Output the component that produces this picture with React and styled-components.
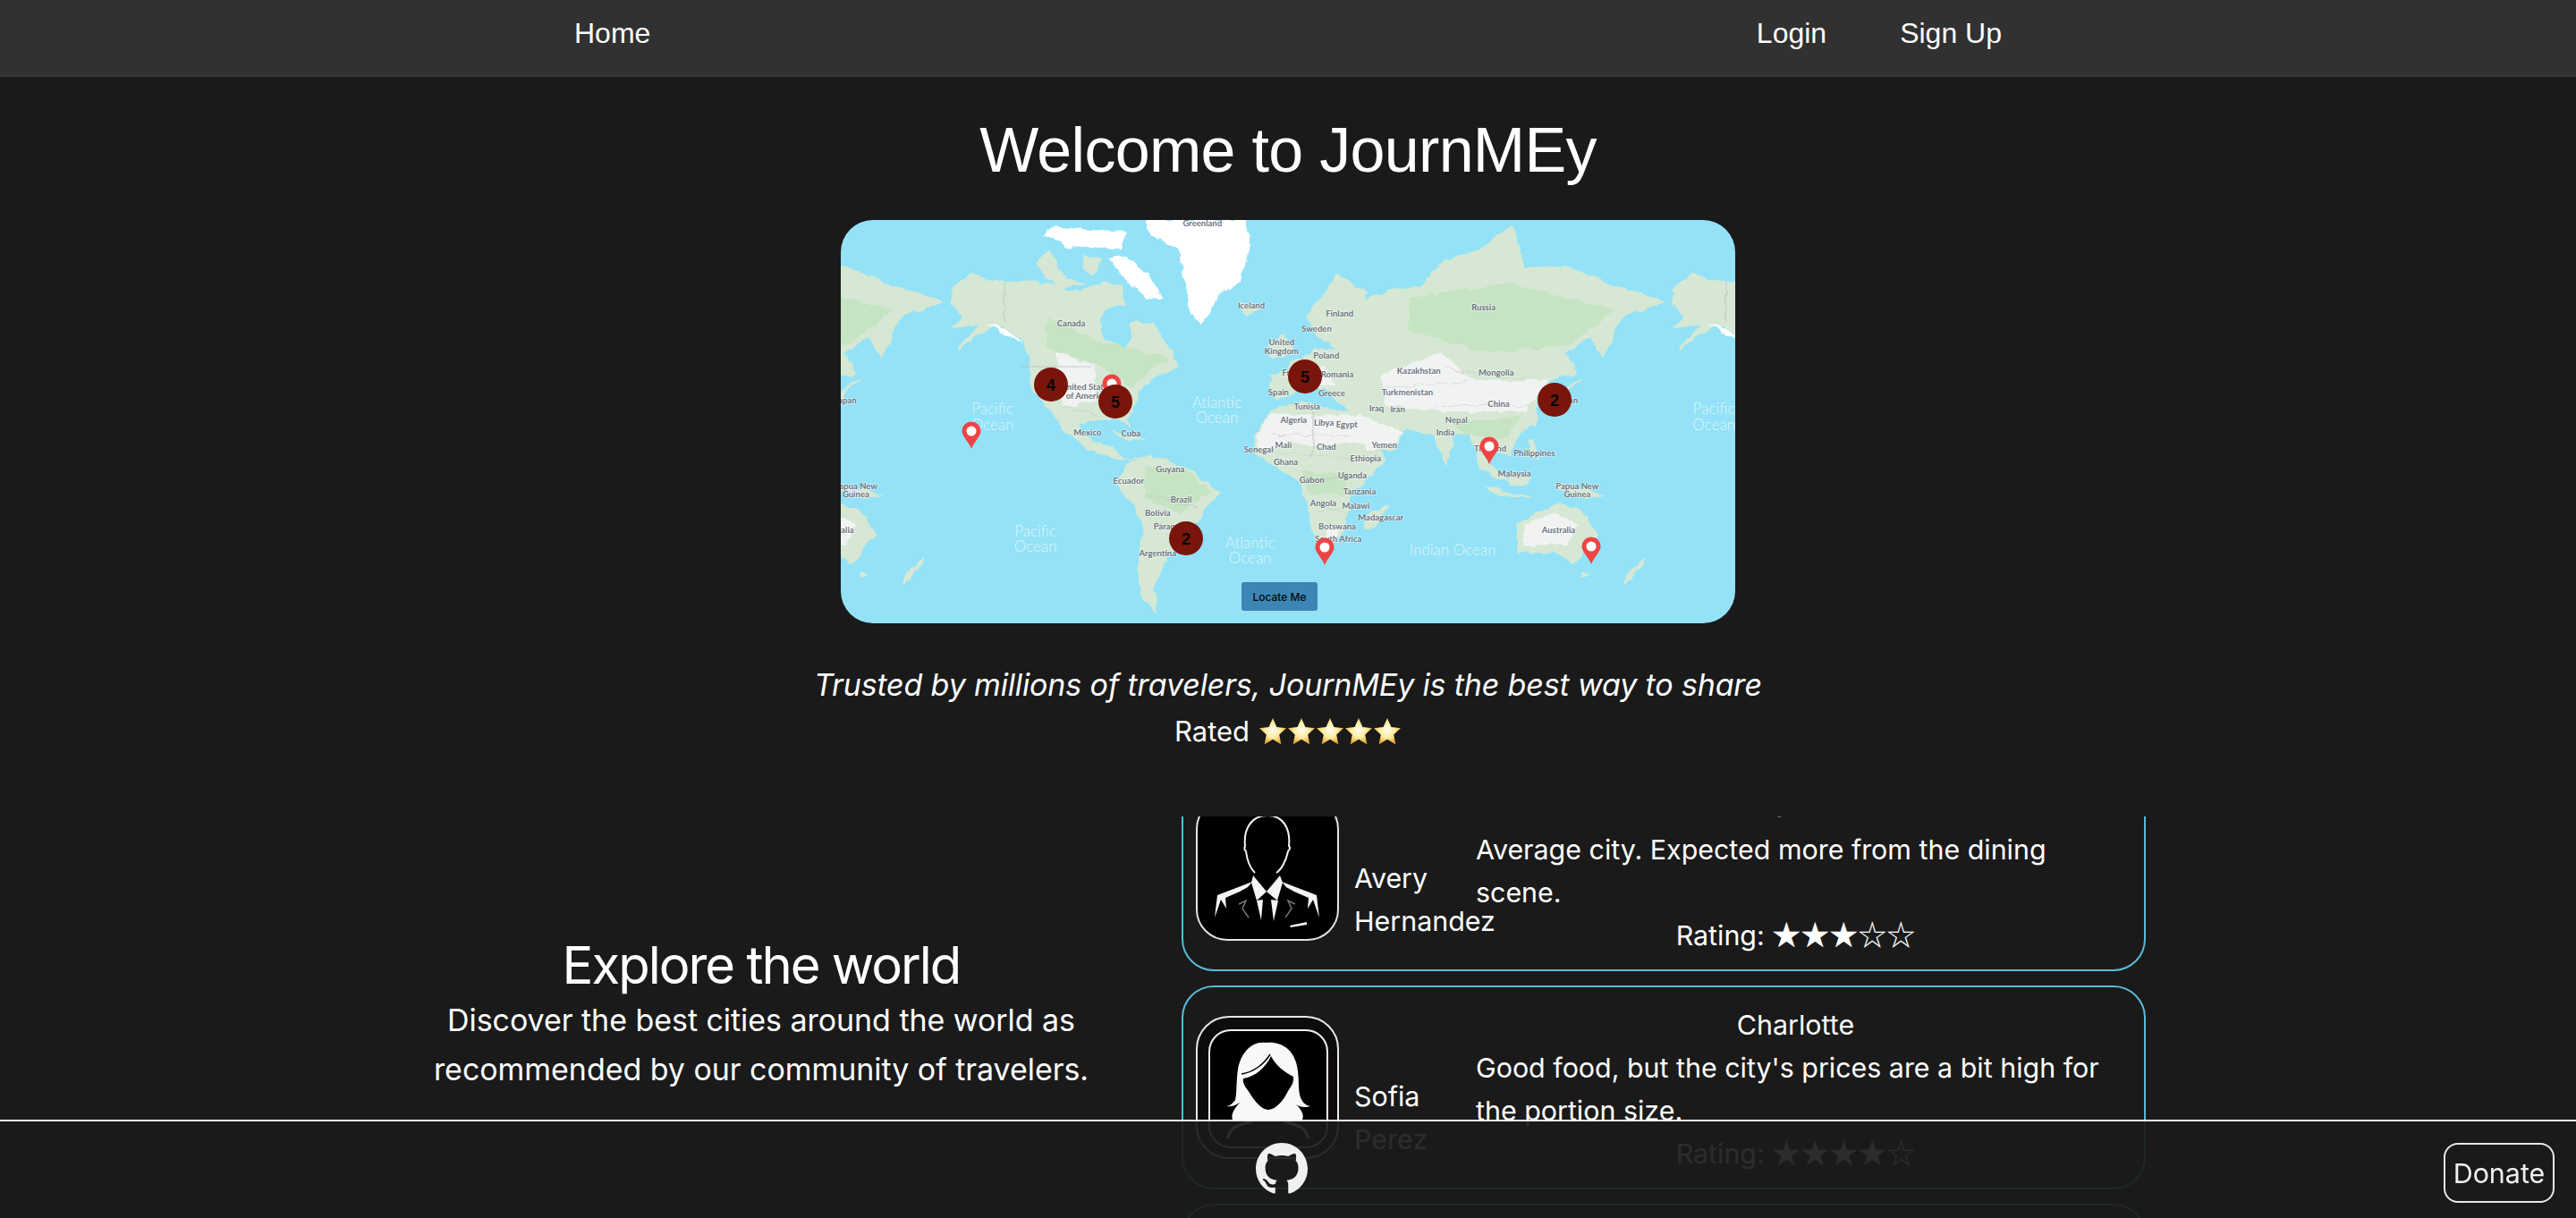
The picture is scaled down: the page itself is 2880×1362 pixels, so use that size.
import styled, { createGlobalStyle } from 'styled-components';

const GlobalStyle = createGlobalStyle`
  html, body {
    margin: 0;
    height: 100%;
    overflow: hidden;
    background: #1a1a1a;
    color: #fff;
    font-family: Inter, "Liberation Sans", sans-serif;
  }
  #root { height: 100%; }
`;

// land is traced in a 1479x1352 grid, scaled down to the 1000x451 map
const LAND = [
  '246,303 276,263 330,288 374,283 416,303 453,318 493,288 522,298 527,358 493,378 485,428 493,478 532,518 540,478 540,418 572,428 606,518 616,568 582,598 552,648 540,718 527,748 535,775 520,745 470,745 450,770 465,810 510,840 525,880 545,880 510,880 470,845 430,780 400,710 374,640 374,528 360,488 325,428 296,448 254,508 291,428 249,438 261,398 244,358',
  '540,890 570,870 630,910 682,990 650,1080 620,1150 590,1230 575,1320 580,1390 555,1330 555,1200 560,1090 530,1000 515,960',
  '770,640 770,600 800,590 800,560 830,540 845,510 880,510 850,470 840,440 830,400 880,265 930,320 920,350 960,320 1020,300 1060,210 1110,190 1170,100 1190,240 1260,230 1320,290 1420,350 1400,370 1350,400 1320,540 1300,470 1255,520 1275,590 1230,620 1210,690 1205,760 1170,820 1165,870 1130,830 1125,890 1165,960 1120,920 1100,790 1070,800 1060,890 1040,800 1000,770 990,780 970,850 925,850 905,740 880,680 860,640 820,640 800,670 780,680',
  '745,800 770,720 820,690 905,730 960,880 900,1000 890,1110 860,1195 840,1130 835,1050 820,950 775,905 745,860',
  '1178,1100 1215,1060 1240,1030 1275,1040 1310,1130 1270,1230 1240,1190 1180,1195',
  '384,218 404,183 429,278 461,293 419,303 395,260',
  '463,198 488,208 478,258 461,238',
  '790,460 812,520 775,540 770,500',
  '718,360 760,370 730,392',
  '1280,610 1265,640 1250,690 1240,680',
  '962,1035 948,1100 925,1112 930,1070',
  '1170,930 1200,940 1190,970 1165,965',
  '1240,960 1320,1000 1290,1012 1250,990',
  '1200,820 1215,880 1200,870',
  '1388,1220 1370,1270 1355,1300 1365,1260',
  '510,790 560,815 530,810',
  '1130,975 1200,1005 1140,995',
  '1285,1260 1296,1268 1285,1275',
];

const ICE = [
  '562,78 729,78 737,158 720,288 690,318 655,428 636,388 631,298 616,178 572,128',
  '503,208 532,198 572,268 591,343 562,338 532,278',
  '394,128 414,98 532,118 522,178 434,168',
  '300,425 330,440 358,495 340,480',
];

const PALE = [
  '745,800 770,730 920,730 950,830 800,830 750,850',
  '920,740 990,790 970,840 930,850',
  '950,600 1050,520 1100,610 1230,620 1190,720 1050,720 960,700',
  '415,520 480,570 480,690 425,700',
  '1190,1100 1240,1060 1280,1100 1260,1170 1190,1170',
  '790,590 860,570 880,640 820,620',
  '860,1100 885,1110 865,1180',
];

const LUSH = [
  '1000,340 1160,290 1340,380 1260,500 1120,520 1000,450',
  '400,400 480,480 600,540 540,640 480,560 400,510',
  '560,900 630,920 670,990 620,1060 560,1010',
  '820,920 900,930 890,1000 835,1000',
  '1070,760 1180,740 1160,810 1090,800',
];

const BORDERS = [
  '770,800 900,800', '840,720 840,870', '780,860 950,880', '835,950 900,940', '850,1050 900,1060',
  '960,640 1100,620', '1040,700 1200,700', '1060,580 1200,610', '560,1000 650,1040', '580,1090 620,1130',
  '425,700 490,735', '330,288 330,420',
];

const LABELS = [
  ['Greenland', 657, 90], ['Iceland', 738, 366], ['Canada', 440, 425], ['Russia', 1122, 371],
  ['Finland', 884, 393], ['Sweden', 846, 444], ['United', 788, 490], ['Kingdom', 788, 520],
  ['Poland', 862, 534], ['Romania', 880, 598], ['Kazakhstan', 1015, 586], ['Mongolia', 1143, 590],
  ['France', 810, 592], ['Spain', 783, 658], ['Greece', 871, 661], ['Turkmenistan', 996, 658],
  ['China', 1147, 695], ['Tunisia', 830, 705], ['Iraq', 945, 711], ['Iran', 980, 714],
  ['Algeria', 808, 750], ['Libya', 858, 760], ['Egypt', 896, 764], ['Nepal', 1077, 750],
  ['India', 1059, 792], ['Mexico', 467, 791], ['Cuba', 539, 796], ['Philippines', 1206, 860],
  ['Mali', 791, 834], ['Chad', 862, 840], ['Yemen', 958, 835], ['Senegal', 750, 849],
  ['Ethiopia', 927, 878], ['Ghana', 795, 892], ['Guyana', 604, 915], ['Malaysia', 1173, 930],
  ['Uganda', 905, 937], ['Ecuador', 535, 955], ['Gabon', 838, 952], ['Tanzania', 917, 991],
  ['Brazil', 622, 1016], ['Angola', 857, 1028], ['Malawi', 911, 1037], ['Bolivia', 583, 1063],
  ['Madagascar', 952, 1077], ['Botswana', 880, 1107], ['Australia', 1246, 1119],
  ['South Africa', 882, 1150], ['Argentina', 583, 1198], ['Paraguay', 605, 1108],
  ['Papua New', 1277, 971], ['Guinea', 1277, 1000], ['United States', 465, 640],
  ['of America', 465, 668], ['Japan', 1260, 683], ['Thailand', 1133, 845],
];

const OCEANS = [
  ['Pacific', 310, 715], ['Ocean', 310, 767], ['Atlantic', 681, 693], ['Ocean', 681, 745],
  ['Pacific', 381, 1125], ['Ocean', 381, 1177], ['Atlantic', 736, 1164], ['Ocean', 736, 1216],
  ['Indian Ocean', 1071, 1188],
];

const toX = (x) => (x - 59) * 0.676;
const toY = (y) => (y - 78) / 3 + 3;

const inView = (x, shift) => x + shift > -30 && x + shift < 1030;

const CLUSTERS = [
  [235, 184, 4], [307, 203, 5], [519, 175, 5], [798, 201, 2], [386, 356, 2],
];

const PINS = [
  [146, 256], [725, 273], [541, 386], [839, 385],
];

const World = ({ x }) => (
  <g transform={`translate(${x} 0)`}>
    <g filter="url(#coast)">
      <g transform="scale(0.676 0.3333) translate(-59 -78)">
        {LAND.map((p) => <polygon key={p} points={p} fill="#d6e8d4" stroke="#d6e8d4" strokeWidth="4" strokeLinejoin="round" />)}
        {LUSH.map((p) => <polygon key={p} points={p} fill="#c6e3c3" />)}
        {PALE.map((p) => <polygon key={p} points={p} fill="#f1f3f3" />)}
        {ICE.map((p) => <polygon key={p} points={p} fill="#ffffff" />)}
        {BORDERS.map((p) => <polyline key={p} points={p} fill="none" stroke="#c3c8c4" strokeWidth="1.6" />)}
      </g>
    </g>
    {LABELS.filter(([, lx]) => inView(toX(lx), x)).map(([t, lx, ly]) => (
      <text key={t} x={toX(lx)} y={toY(ly)} textAnchor="middle" fontFamily="Lato, sans-serif" fontSize="9.5" fontWeight="700" fill="#6d7480" stroke="#ffffff" strokeOpacity="0.55" strokeWidth="1.6" paintOrder="stroke">{t}</text>
    ))}
    {OCEANS.filter(([, lx]) => inView(toX(lx), x)).map(([t, lx, ly]) => (
      <text key={`${t}${lx}${ly}`} x={toX(lx)} y={toY(ly) + 2} textAnchor="middle" fontFamily="Lato, sans-serif" fontSize="17" fontWeight="300" fill="#dff5fb">{t}</text>
    ))}
  </g>
);

const Pin = ({ x, tip }) => (
  <g transform={`translate(${x} ${tip})`}>
    <path d="M0 0 C-3 -8 -10.5 -14 -10.5 -20 A10.5 10.5 0 1 1 10.5 -20 C10.5 -14 3 -8 0 0 Z" fill="#ef4444" />
    <circle cy="-20" r="5.5" fill="#fff" />
  </g>
);

const WorldMap = () => (
  <MapSvg viewBox="0 0 1000 451">
    <defs>
      <filter id="coast" x="-5%" y="-5%" width="110%" height="110%">
        <feTurbulence type="fractalNoise" baseFrequency="0.07" numOctaves="3" seed="4" />
        <feDisplacementMap in="SourceGraphic" scale="9" xChannelSelector="R" yChannelSelector="G" />
        <feGaussianBlur stdDeviation="0.5" />
      </filter>
    </defs>
    <rect width="1000" height="451" fill="#93e2f7" />
    <World x={-806.5} />
    <World x={0} />
    <World x={806.5} />
    <polyline points="199,164 280,164" fill="none" stroke="#b9bdb8" strokeWidth="0.8" />
    <Pin x={303} tip={203} />
    {PINS.map(([x, tip]) => <Pin key={x} x={x} tip={tip} />)}
    {CLUSTERS.map(([x, y, n]) => (
      <g key={x}>
        <circle cx={x} cy={y} r="19" fill="#7a150b" />
        <text x={x} y={y + 6.5} textAnchor="middle" fontFamily="Liberation Sans, sans-serif" fontWeight="700" fontSize="18" fill="#0a0505">{n}</text>
      </g>
    ))}
  </MapSvg>
);

const EmojiStar = () => (
  <StarSvg viewBox="0 0 32 32">
    <defs>
      <radialGradient id="gold" cx="50%" cy="45%" r="58%">
        <stop offset="0%" stopColor="#fffdf0" />
        <stop offset="50%" stopColor="#fdeb9f" />
        <stop offset="100%" stopColor="#e39a20" />
      </radialGradient>
    </defs>
    <path d="M16 1 L20.4 11 L31 12.2 L23.2 19.4 L25.4 30.4 L16 24.8 L6.6 30.4 L8.8 19.4 L1 12.2 L11.6 11 Z" fill="url(#gold)" />
  </StarSvg>
);

const ManAvatar = () => (
  <AvatarSvg viewBox="0 0 160 160">
    <rect x="1" y="1" width="158" height="158" rx="34" fill="#000" stroke="#e4e4e4" strokeWidth="2" />
    <path d="M66 84 C60 78 57 68 56 60 C54 58 54 56 55 54 C53 35 62 20 80 20 C98 20 106 35 104 54 C106 56 105 58 103 60 C101 70 96 80 90 84" fill="none" stroke="#f2f2f2" strokeWidth="2" />
    <g fill="#f6f5f3">
      <polygon points="64,87 79,105 68,115 62,95" />
      <polygon points="94,87 79,105 91,115 97,95" />
      <polygon points="68,115 75,114 73,137" />
      <polygon points="84,114 92,115 87,138" />
      <polygon points="63,94 24,109 21,134 28,114 34,124 33,112 49,105 58,100" />
      <polygon points="96,94 135,109 138,134 131,114 125,124 126,112 110,105 101,100" />
      <polygon points="105,143 124,139 124,142 106,145" />
    </g>
    <polyline points="48,119 56,115 52,124 59,134" fill="none" stroke="#777" strokeWidth="1.5" />
    <polyline points="111,119 103,115 107,124 100,134" fill="none" stroke="#777" strokeWidth="1.5" />
  </AvatarSvg>
);

const WomanAvatar = () => (
  <AvatarSvg viewBox="0 0 160 160">
    <rect x="1" y="1" width="158" height="158" rx="36" fill="#0e0b0c" stroke="#e8e8e8" strokeWidth="2" />
    <rect x="15" y="16" width="132" height="131" rx="24" fill="#000" stroke="#f0f0f0" strokeWidth="2" />
    <path d="M78 30 C62 28 50 42 47 60 C45 72 46 86 44 94 C41 98 38 101 34 101 C42 102 46 99 50 96 C42 104 38 112 42 118 L118 118 C122 112 119 106 112 99 C116 102 122 103 128 101 C122 100 118 96 116 88 C114 76 116 66 112 52 C108 38 96 28 78 30 Z" fill="#f8f8f8" />
    <path d="M84 45 C78 58 66 68 53 70 C52 76 56 80 60 86 C66 96 74 105 81 105 C88 105 97 96 102 86 C105 80 110 76 109 68 C98 62 90 56 84 45 Z" fill="#000" />
    <path d="M52 68 C66 66 78 56 84 46" fill="none" stroke="#000" strokeWidth="1.5" transform="translate(-1 -3)" />
    <path d="M36 137 C36 124 52 120 64 118 M125 137 C125 124 108 120 98 118" fill="none" stroke="#fff" strokeWidth="3" />
  </AvatarSvg>
);

const REVIEWS = [
  { name: 'Avery Hernandez', city: 'Charlotte', text: 'Average city. Expected more from the dining scene.', score: 3, Avatar: ManAvatar },
  { name: 'Sofia Perez', city: 'Charlotte', text: "Good food, but the city's prices are a bit high for the portion size.", score: 4, Avatar: WomanAvatar },
  { name: 'Liam Carter', city: 'Charlotte', text: 'Friendly people and plenty to see.', score: 4, Avatar: ManAvatar },
];

const App = () => (
  <Page>
    <GlobalStyle />
    <NavBar>
      <NavInner>
        <NavLink>Home</NavLink>
        <NavGroup>
          <NavLink>Login</NavLink>
          <NavLink>Sign Up</NavLink>
        </NavGroup>
      </NavInner>
    </NavBar>

    <Title>Welcome to JournMEy</Title>
    <MapBox>
      <WorldMap />
      <LocateButton>Locate Me</LocateButton>
    </MapBox>
    <Tagline>Trusted by millions of travelers, JournMEy is the best way to share</Tagline>
    <RatedRow>
      Rated
      <Stars>{[1, 2, 3, 4, 5].map((i) => <EmojiStar key={i} />)}</Stars>
    </RatedRow>

    <Lower>
      <Intro>
        <IntroTitle>Explore the world</IntroTitle>
        <IntroText>Discover the best cities around the world as recommended by our community of travelers.</IntroText>
      </Intro>
      <ReviewPanel>
        <ReviewList>
          {REVIEWS.map(({ name, city, text, score, Avatar }) => (
            <ReviewCard key={name}>
              <Author>
                <Avatar />
                <AuthorName>{name}</AuthorName>
              </Author>
              <ReviewBody>
                <City>{city}</City>
                <ReviewText>{text}</ReviewText>
                <Rating>
                  Rating: <RatingStars>{'★'.repeat(score)}{'☆'.repeat(5 - score)}</RatingStars>
                </Rating>
              </ReviewBody>
            </ReviewCard>
          ))}
        </ReviewList>
      </ReviewPanel>
    </Lower>

    <Footer>
      <GithubMark viewBox="0 0 16 16">
        <path fill="#f0f0f0" d="M8 0C3.58 0 0 3.58 0 8c0 3.54 2.29 6.53 5.47 7.59.4.07.55-.17.55-.38 0-.19-.01-.82-.01-1.49-2.01.37-2.53-.49-2.69-.94-.09-.23-.48-.94-.82-1.13-.28-.15-.68-.52-.01-.53.63-.01 1.08.58 1.23.82.72 1.21 1.87.87 2.33.66.07-.52.28-.87.51-1.07-1.78-.2-3.64-.89-3.64-3.95 0-.87.31-1.59.82-2.15-.08-.2-.36-1.02.08-2.12 0 0 .67-.21 2.2.82.64-.18 1.32-.27 2-.27.68 0 1.36.09 2 .27 1.53-1.04 2.2-.82 2.2-.82.44 1.1.16 1.92.08 2.12.51.56.82 1.27.82 2.15 0 3.07-1.87 3.75-3.65 3.95.29.25.54.73.54 1.48 0 1.07-.01 1.93-.01 2.2 0 .21.15.46.55.38A8.013 8.013 0 0016 8c0-4.42-3.58-8-8-8z" />
      </GithubMark>
      <DonateButton>Donate</DonateButton>
    </Footer>
  </Page>
);

const Page = styled.div`
  height: 100vh;
  display: flex;
  flex-direction: column;
  align-items: center;
  overflow: hidden;
`;

const NavBar = styled.nav`
  width: 100%;
  height: 84px;
  flex: none;
  background: #313131;
  border-bottom: 2px solid #383838;
  display: flex;
  justify-content: center;
  box-sizing: content-box;
`;

const NavInner = styled.div`
  width: 1596px;
  height: 74px;
  display: flex;
  align-items: center;
  justify-content: space-between;
`;

const NavGroup = styled.div`
  display: flex;
  gap: 82px;
`;

const NavLink = styled.a`
  font-family: "Liberation Sans", Arial, sans-serif;
  font-size: 32px;
  color: #fff;
`;

const Title = styled.h1`
  margin: 39px 0 35px;
  font-family: "Liberation Sans", Arial, sans-serif;
  font-size: 70px;
  line-height: 86px;
  letter-spacing: -0.7px;
  font-weight: 400;
`;

const MapBox = styled.div`
  position: relative;
  flex: none;
  width: 1000px;
  height: 451px;
  border-radius: 36px;
  overflow: hidden;
`;

const MapSvg = styled.svg`
  display: block;
  width: 100%;
  height: 100%;
`;

const LocateButton = styled.button`
  position: absolute;
  left: 448px;
  top: 405px;
  width: 85px;
  height: 32px;
  padding: 0;
  border: none;
  border-radius: 3px;
  background: #3b86b5;
  color: #050505;
  font-family: Inter, sans-serif;
  font-size: 12px;
  font-weight: 500;
`;

const Tagline = styled.p`
  margin: 43px 0 0;
  font-size: 34px;
  line-height: 52px;
  letter-spacing: -0.15px;
  font-style: italic;
`;

const RatedRow = styled.div`
  display: flex;
  align-items: center;
  gap: 10px;
  margin-top: 2px;
  font-size: 31px;
  line-height: 48px;
`;

const Stars = styled.span`
  display: flex;
`;

const StarSvg = styled.svg`
  width: 32px;
  height: 32px;
`;

const Lower = styled.section`
  flex: 1;
  min-height: 0;
  width: 100%;
  margin-top: 71px;
  box-sizing: border-box;
  padding-left: 381px;
  display: grid;
  grid-template-columns: 940px 1078px;
`;

const Intro = styled.div`
  display: flex;
  flex-direction: column;
  align-items: center;
  justify-content: center;
  padding-bottom: 8px;
  text-align: center;
`;

const IntroTitle = styled.h2`
  margin: 0;
  font-size: 58px;
  line-height: 68px;
  letter-spacing: -2px;
  font-weight: 400;
`;

const IntroText = styled.p`
  margin: 0;
  width: 780px;
  font-size: 34px;
  line-height: 55px;
  letter-spacing: -0.05px;
`;

const ReviewPanel = styled.div`
  overflow: hidden;
`;

const ReviewList = styled.div`
  display: flex;
  flex-direction: column;
  gap: 16px;
  margin-top: -55px;
`;

const ReviewCard = styled.article`
  flex: none;
  box-sizing: border-box;
  height: 228px;
  padding: 16px 32px 16px 14px;
  border: 2px solid #58bcd9;
  border-radius: 36px;
  display: flex;
  align-items: center;
`;

const Author = styled.div`
  width: 313px;
  flex: none;
  display: flex;
  align-items: flex-end;
  gap: 17px;
`;

const AvatarSvg = styled.svg`
  flex: none;
  width: 160px;
  height: 160px;
`;

const AuthorName = styled.div`
  width: 136px;
  flex: none;
  margin-bottom: -2px;
  font-size: 30.4px;
  line-height: 48px;
`;

const ReviewBody = styled.div`
  flex: 1;
  padding-top: 3px;
  text-align: center;
  font-size: 30.4px;
  line-height: 48px;
`;

const City = styled.div`
  text-align: center;
`;

const ReviewText = styled.p`
  margin: 0;
  height: 96px;
  text-align: left;
`;

const Rating = styled.div`
  text-align: center;
`;

const RatingStars = styled.span`
  font-family: "Noto Sans CJK JP", "DejaVu Sans", sans-serif;
  font-size: 32px;
  line-height: 32px;
`;

const Footer = styled.footer`
  position: fixed;
  left: 0;
  right: 0;
  bottom: 0;
  height: 108px;
  border-top: 2px solid #eeeeee;
  background: rgba(26, 26, 26, 0.92);
`;

const GithubMark = styled.svg`
  position: absolute;
  left: 1404px;
  top: 24px;
  width: 58px;
  height: 58px;
`;

const DonateButton = styled.button`
  position: absolute;
  right: 24px;
  top: 24px;
  width: 124px;
  height: 67px;
  padding: 0;
  border: 2px solid #e8e8e8;
  border-radius: 16px;
  background: transparent;
  color: #f0f0f0;
  font-family: Inter, sans-serif;
  font-size: 30.4px;
`;

export default App;
